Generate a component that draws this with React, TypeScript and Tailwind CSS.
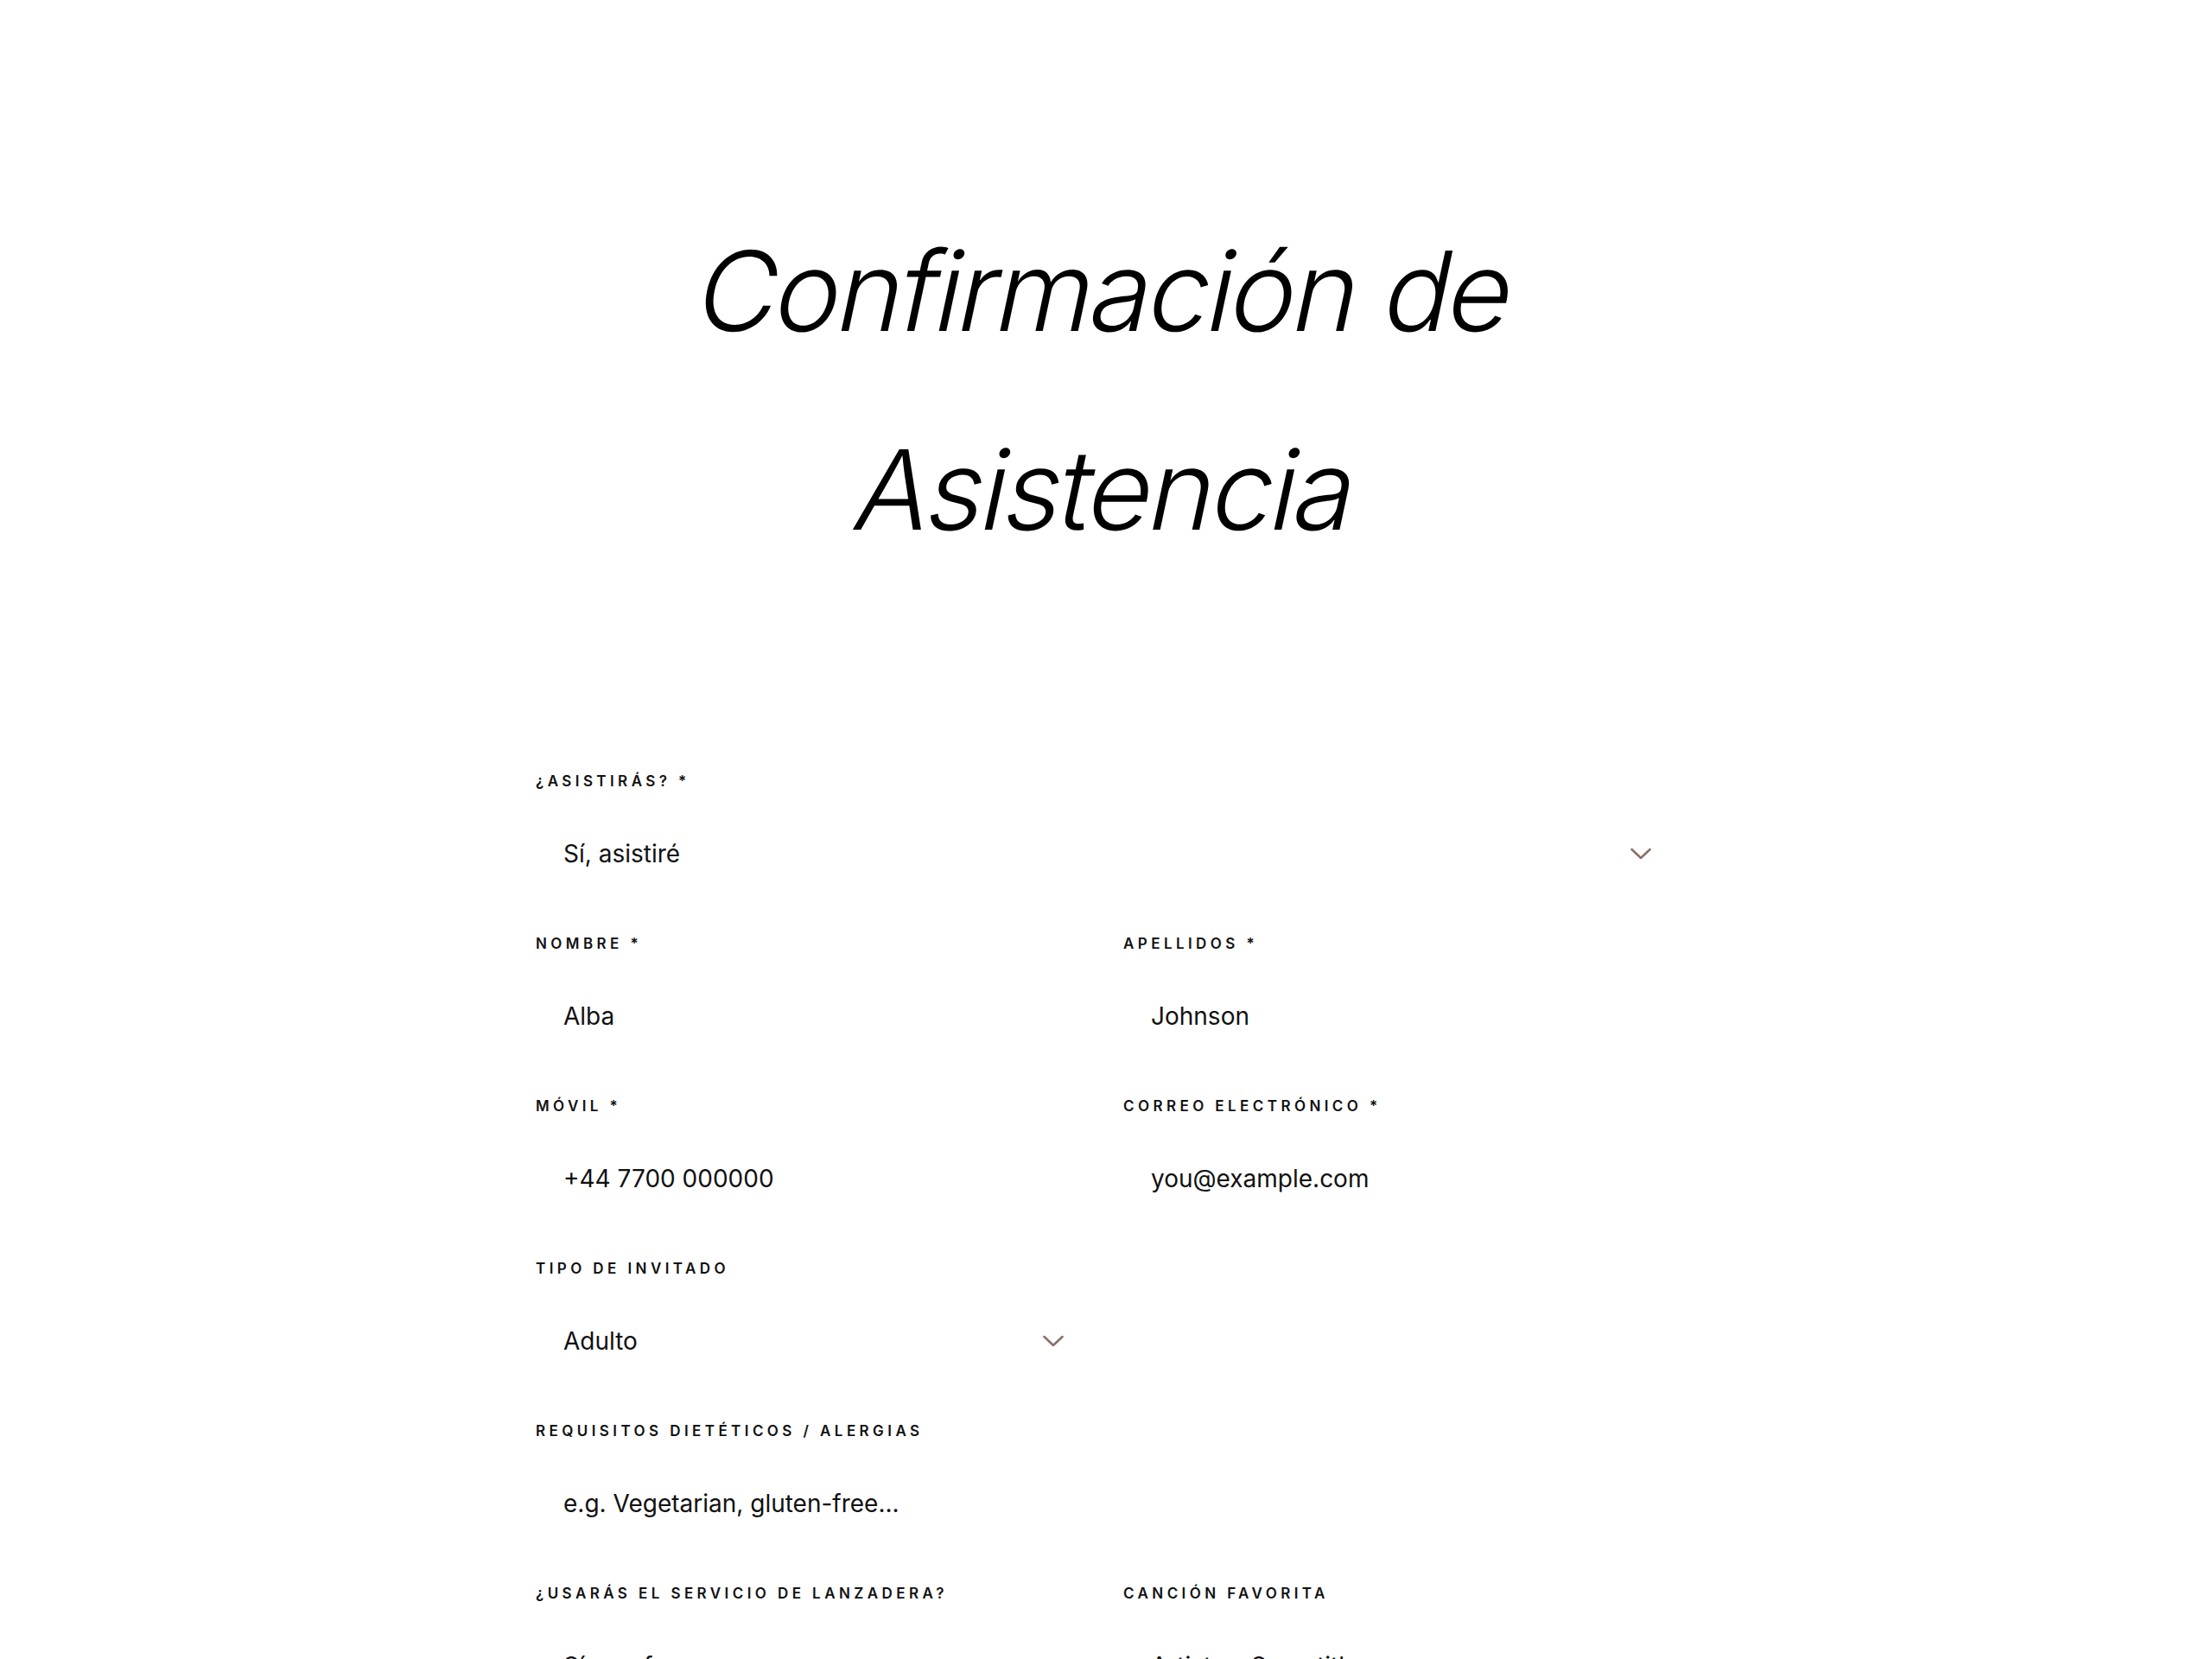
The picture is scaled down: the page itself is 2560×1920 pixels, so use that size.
import React from 'react';

type FieldProps = {
  label: string;
  value: string;
  select?: boolean;
  wide?: boolean;
};

const Chevron = () => (
  <svg
    viewBox="0 0 24 13"
    className="pointer-events-none absolute right-[29px] top-1/2 h-[13px] w-[24px] -translate-y-1/2"
    fill="none"
    stroke="#8a7266"
    strokeWidth="2.6"
    strokeLinecap="round"
    strokeLinejoin="round"
  >
    <polyline points="1.5,1.5 12,11.5 22.5,1.5" />
  </svg>
);

const Field: React.FC<FieldProps> = ({ label, value, select = false, wide = false }) => (
  <div className={wide ? 'col-span-2' : ''}>
    <label className="block text-[17px] font-semibold uppercase leading-[16px] tracking-[0.26em] text-[#111111]">
      {label}
    </label>
    <div className="relative mt-[28px] h-[96px]">
      <input
        readOnly
        value={value}
        className="h-full w-full bg-white pl-[32px] pr-[80px] text-[28px] text-[#111111] outline-none"
      />
      {select && <Chevron />}
    </div>
  </div>
);

export default function App() {
  return (
    <div className="min-h-screen bg-white font-['Inter','Noto_Sans',sans-serif] text-black">
      <div className="mx-auto w-[1320px] pt-[222px]">
        {/* oblique title: each line skewed on its own so both stay centred */}
        <h1 className="text-center text-[128px] font-light leading-[230px] tracking-[-0.025em] text-black">
          <span className="inline-block -skew-x-12">Confirmación de</span>
          <br />
          <span className="inline-block -skew-x-12">Asistencia</span>
        </h1>

        <form className="mt-[214px] grid grid-cols-2 gap-x-[40px] gap-y-[48px] pb-[200px]">
          <Field label="¿Asistirás? *" value="Sí, asistiré" select wide />
          <Field label="Nombre *" value="Alba" />
          <Field label="Apellidos *" value="Johnson" />
          <Field label="Móvil *" value="+44 7700 000000" />
          <Field label="Correo electrónico *" value="you@example.com" />
          <Field label="Tipo de invitado" value="Adulto" select />
          <div />
          <Field label="Requisitos dietéticos / alergias" value="e.g. Vegetarian, gluten-free..." wide />
          <Field label="¿Usarás el servicio de lanzadera?" value="Sí, por favor" select />
          <Field label="Canción favorita" value="Artista – Song title" />
        </form>
      </div>
    </div>
  );
}
